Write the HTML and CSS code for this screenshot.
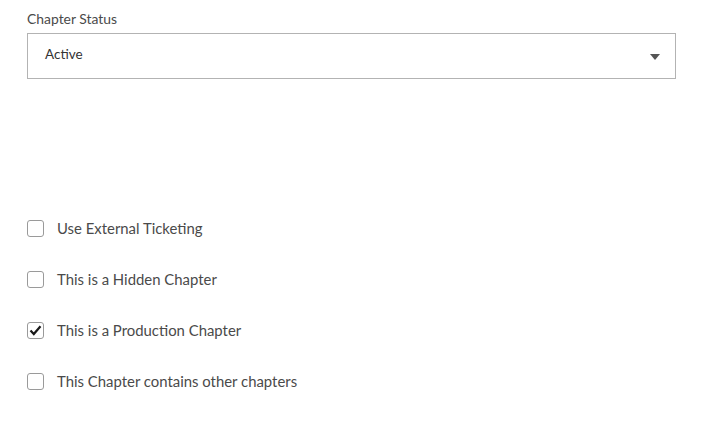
FILE: index.html
```html
<!DOCTYPE html>
<html>
<head>
<meta charset="utf-8">
<link rel="stylesheet" href="styles.css">
</head>
<body>
<div class="form">
  <div class="field">
    <label class="field-label">Chapter Status</label>
    <div class="select">
      <span class="select-value">Active</span>
      <svg class="caret" width="10" height="6" viewBox="0 0 10 6"><path d="M0 0 L10 0 L5 6 Z" fill="#555"/></svg>
    </div>
  </div>
  <div class="checks">
    <div class="check"><span class="box"></span><span class="check-label">Use External Ticketing</span></div>
    <div class="check"><span class="box"></span><span class="check-label">This is a Hidden Chapter</span></div>
    <div class="check"><span class="box checked"><svg width="13" height="11" viewBox="0 0 13 11"><path d="M1.5 5.5 L4.8 9 L11.5 1.2" fill="none" stroke="#1a1a1a" stroke-width="2.2"/></svg></span><span class="check-label">This is a Production Chapter</span></div>
    <div class="check"><span class="box"></span><span class="check-label">This Chapter contains other chapters</span></div>
  </div>
</div>
</body>
</html>
```
FILE: styles.css
```css
html, body { margin: 0; padding: 0; background: #fff; }
body { font-family: "Lato", "Liberation Sans", sans-serif; color: #4a4a4a; }
.form { padding: 11px 26px 0 27px; }
.field-label { display: block; font-size: 13.9px; line-height: 16px; color: #4a4a4a; margin-bottom: 6px; }
.select {
  height: 44px; border: 1px solid #b3b3b3; box-sizing: content-box;
  display: flex; align-items: center; justify-content: space-between;
  padding: 0 15px 0 17px;
}
.select-value { font-size: 13.5px; color: #333; margin-top: -5px; }
.caret { margin-top: 2px; }
.checks { margin-top: 141px; display: flex; flex-direction: column; gap: 34px; }
.check { display: flex; align-items: center; height: 17px; }
.box {
  width: 15px; height: 15px; border: 1px solid #9a9a9a; border-radius: 3px;
  display: flex; align-items: center; justify-content: center; margin-right: 13px;
}
.check-label { font-size: 14.9px; color: #4a4a4a; margin-top: -2px; }
```
